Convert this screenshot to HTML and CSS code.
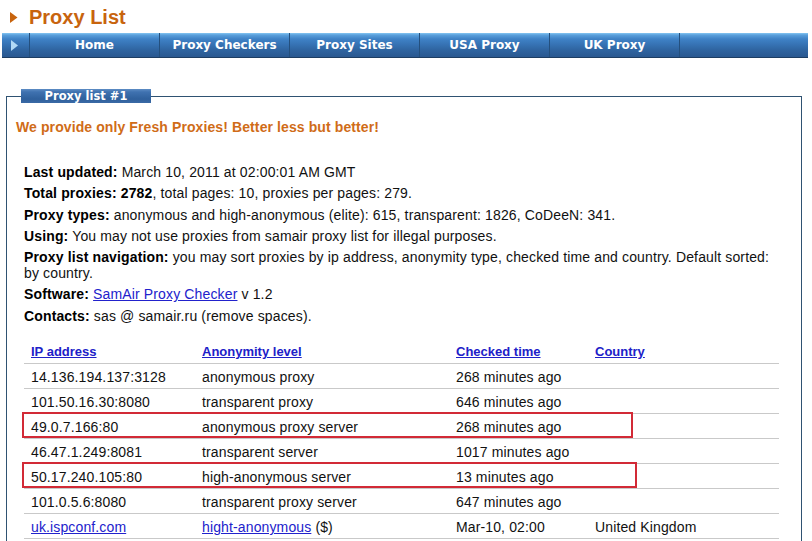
FILE: index.html
```html
<!DOCTYPE html>
<html>
<head>
<meta charset="utf-8">
<title>Proxy List</title>
<link rel="stylesheet" href="styles.css">
</head>
<body>
<header class="title">
  <svg class="title-arrow" width="8" height="11" viewBox="0 0 8 11"><path d="M0 0 L7.5 5.5 L0 11 Z"/></svg>
  <h1>Proxy List</h1>
</header>
<nav class="nav">
  <span class="nav-arrow"><svg width="7" height="11" viewBox="0 0 7 11"><path d="M0 0 L7 5.5 L0 11 Z"/></svg></span>
  <a class="nav-item" href="#">Home</a>
  <a class="nav-item" href="#">Proxy Checkers</a>
  <a class="nav-item" href="#">Proxy Sites</a>
  <a class="nav-item" href="#">USA Proxy</a>
  <a class="nav-item" href="#">UK Proxy</a>
  <span class="nav-rest"></span>
</nav>
<fieldset class="panel">
  <legend class="panel-legend"><span class="panel-legend-text">Proxy list #1</span></legend>
  <p class="fresh">We provide only Fresh Proxies! Better less but better!</p>
  <div class="info">
    <p><b>Last updated:</b> March 10, 2011 at 02:00:01 AM GMT</p>
    <p><b>Total proxies: 2782</b>, total pages: 10, proxies per pages: 279.</p>
    <p><b>Proxy types:</b> anonymous and high-anonymous (elite): 615, transparent: 1826, CoDeeN: 341.</p>
    <p><b>Using:</b> You may not use proxies from samair proxy list for illegal purposes.</p>
    <p><b>Proxy list navigation:</b> <span>you may sort proxies by ip address, anonymity type, checked time and country. Default sorted:</span> <span>by country.</span></p>
    <p><b>Software:</b> <a href="#">SamAir Proxy Checker</a> v 1.2</p>
    <p><b>Contacts:</b> sas @ samair.ru (remove spaces).</p>
  </div>
  <table class="proxies">
    <colgroup><col class="c-ip"><col class="c-anon"><col class="c-time"><col class="c-country"></colgroup>
    <thead>
      <tr><th><a href="#">IP address</a></th><th><a href="#">Anonymity level</a></th><th><a href="#">Checked time</a></th><th><a href="#">Country</a></th></tr>
    </thead>
    <tbody>
      <tr><td>14.136.194.137:3128</td><td>anonymous proxy</td><td>268 minutes ago</td><td></td></tr>
      <tr><td>101.50.16.30:8080</td><td>transparent proxy</td><td>646 minutes ago</td><td></td></tr>
      <tr><td class="marked"><span class="mark mark-a"></span>49.0.7.166:80</td><td>anonymous proxy server</td><td>268 minutes ago</td><td></td></tr>
      <tr><td>46.47.1.249:8081</td><td>transparent server</td><td>1017 minutes ago</td><td></td></tr>
      <tr><td class="marked"><span class="mark mark-b"></span>50.17.240.105:80</td><td>high-anonymous server</td><td>13 minutes ago</td><td></td></tr>
      <tr><td>101.0.5.6:8080</td><td>transparent proxy server</td><td>647 minutes ago</td><td></td></tr>
      <tr><td><a href="#">uk.ispconf.com</a></td><td><a href="#">hight-anonymous</a> ($)</td><td>Mar-10, 02:00</td><td>United Kingdom</td></tr>
    </tbody>
  </table>
</fieldset>
</body>
</html>
```

FILE: styles.css
```css
html, body {
  margin: 0;
  padding: 0;
  background: #ffffff;
}

body {
  width: 812px;
  font-family: "Liberation Sans", Arial, sans-serif;
  color: #111111;
  overflow: hidden;
}

/* ---------- Title ---------- */
.title {
  display: flex;
  align-items: flex-start;
  height: 33px;
  box-sizing: border-box;
  padding: 6px 0 0 10px;
}

.title-arrow {
  margin: 6px 11px 0 0;
  fill: #c8640e;
}

.title h1 {
  margin: 0;
  font-size: 20px;
  line-height: 23px;
  font-weight: bold;
  color: #c8640e;
}

/* ---------- Navigation bar ---------- */
.nav {
  display: flex;
  height: 25px;
  margin: 0 4px 0 2px;
  box-sizing: border-box;
  border-bottom: 1px solid #1d3d62;
  background: linear-gradient(to bottom, #86c6f2 0px, #5aa0dc 2px, #3f82c6 6px, #3774b6 11px, #2f64a0 17px, #2a5890 24px);
}

.nav-arrow {
  flex: 0 0 27px;
  display: flex;
  align-items: center;
  justify-content: center;
  padding-right: 3px;
  box-sizing: border-box;
}

.nav-arrow svg {
  fill: #b2daf6;
}

.nav-item {
  flex: 0 0 130px;
  box-sizing: border-box;
  border-left: 1px solid #24507e;
  text-align: center;
  font-family: "DejaVu Sans", Verdana, sans-serif;
  font-weight: bold;
  font-size: 12px;
  line-height: 24px;
  color: #ffffff;
  text-decoration: none;
}

.nav-rest {
  flex: 1 1 auto;
  border-left: 1px solid #24507e;
}

/* ---------- Panel ---------- */
.panel {
  margin: 31px 10px 0 6px;
  padding: 0 0 20px 0;
  border: 1px solid #2f5272;
  min-width: 0;
}

.panel-legend {
  margin-left: 14px;
  padding: 0;
  width: 130px;
  height: 14px;
  box-sizing: border-box;
  background: linear-gradient(to bottom, #5d8cc4 0px, #3f72b0 3px, #2f609c 10px, #3a6aa6 14px);
}

.panel-legend-text {
  display: block;
  text-align: center;
  color: #ffffff;
  font-family: "DejaVu Sans", Verdana, sans-serif;
  font-weight: bold;
  font-size: 11.5px;
  line-height: 14px;
}

.fresh {
  margin: 16px 0 0 9px;
  font-size: 14px;
  line-height: 16px;
  font-weight: bold;
  color: #d06c18;
  letter-spacing: 0.1px;
}

.info {
  margin: 29px 0 0 0;
  padding: 0 14px 0 17px;
  font-size: 14px;
  line-height: 16px;
  letter-spacing: 0.14px;
}

.info p {
  margin: 0 0 5.3px 0;
}

.info b {
  color: #000000;
}

a {
  color: #2222cc;
}

/* ---------- Table ---------- */
.proxies {
  margin: 15.6px 0 0 17px;
  width: 755px;
  border-collapse: collapse;
  font-size: 14px;
  letter-spacing: 0.13px;
}

.c-ip { width: 171px; }
.c-anon { width: 254px; }
.c-time { width: 139px; }

.proxies th,
.proxies td {
  height: 22px;
  padding: 2px 0 0 7px;
  text-align: left;
  vertical-align: middle;
  border-bottom: 1px solid #c9c9c9;
  white-space: nowrap;
}

.proxies th {
  padding: 1px 0 1px 7px;
  font-size: 13px;
  font-weight: bold;
  letter-spacing: 0;
}

.proxies th a {
  color: #2020c8;
}

/* ---------- Annotation boxes ---------- */
.marked {
  position: relative;
}

.mark {
  position: absolute;
  left: -2px;
  top: -2px;
  height: 26px;
  box-sizing: border-box;
  border: 2px solid #d22a36;
  pointer-events: none;
}

.mark-a { width: 611px; }
.mark-b { width: 615px; }
```
